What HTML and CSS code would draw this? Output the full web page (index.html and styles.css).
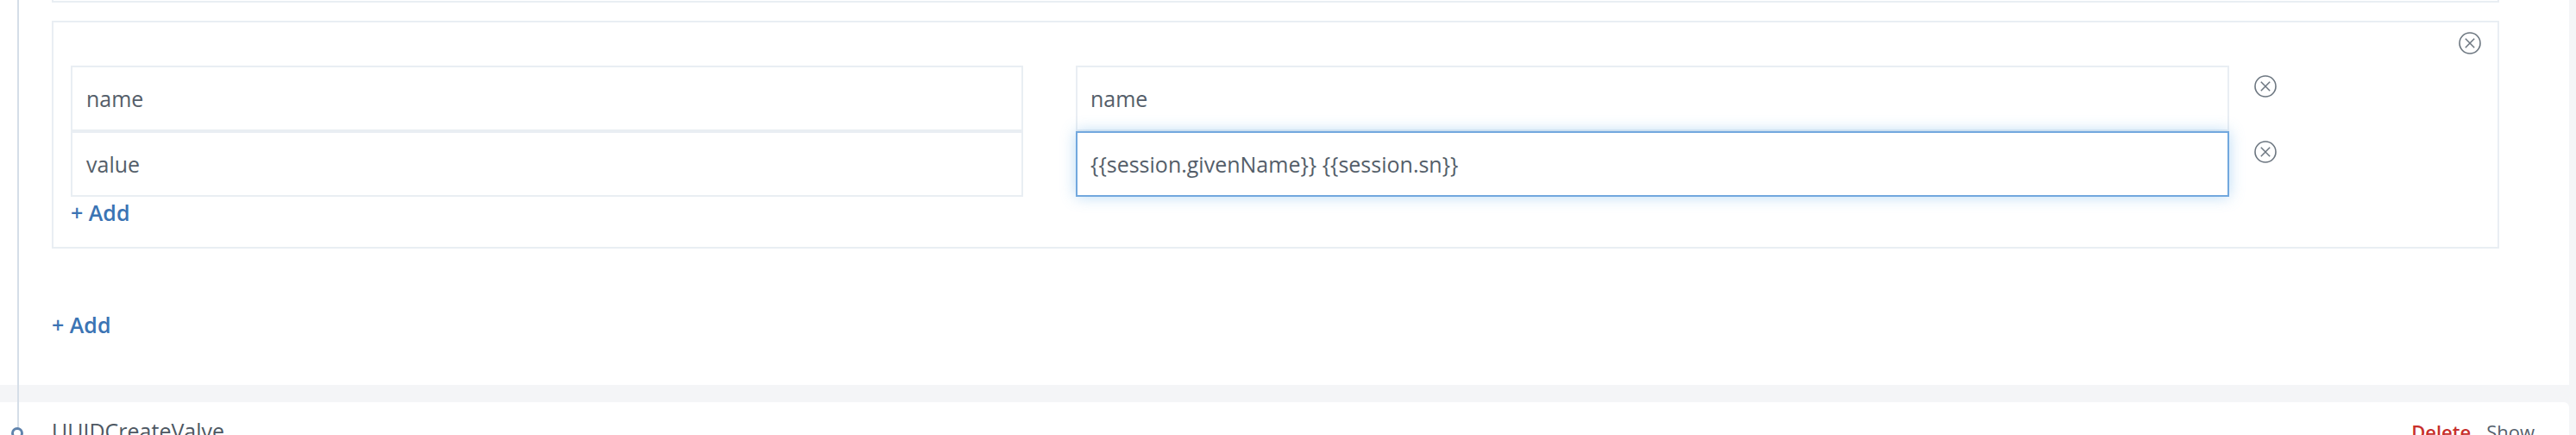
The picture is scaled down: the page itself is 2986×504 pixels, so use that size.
FILE: index.html
```html
<!DOCTYPE html>
<html lang="en">
<head>
<meta charset="utf-8">
<title>Valves</title>
<link rel="stylesheet" href="styles.css">
</head>
<body>
<div class="page">
  <div class="timeline-line"></div>
  <section class="panel panel-top">
    <div class="prev-card"></div>
    <div class="card">
      <div class="card-head">
        <span class="remove" aria-label="Remove"><svg viewBox="0 0 26 26" width="26" height="26"><circle cx="13" cy="13" r="12" fill="none" stroke="#6c7680" stroke-width="1.6"/><path d="M7.8 7.8 L18.2 18.2 M18.2 7.8 L7.8 18.2" stroke="#6c7680" stroke-width="1.5" fill="none"/></svg></span>
      </div>
      <div class="kv-row">
        <div class="cell key">name</div>
        <div class="cell val">name</div>
        <span class="remove row-remove" aria-label="Remove"><svg viewBox="0 0 26 26" width="26" height="26"><circle cx="13" cy="13" r="12" fill="none" stroke="#6c7680" stroke-width="1.6"/><path d="M7.8 7.8 L18.2 18.2 M18.2 7.8 L7.8 18.2" stroke="#6c7680" stroke-width="1.5" fill="none"/></svg></span>
      </div>
      <div class="kv-row">
        <div class="cell key">value</div>
        <div class="cell val focused">{{session.givenName}} {{session.sn}}</div>
        <span class="remove row-remove" aria-label="Remove"><svg viewBox="0 0 26 26" width="26" height="26"><circle cx="13" cy="13" r="12" fill="none" stroke="#6c7680" stroke-width="1.6"/><path d="M7.8 7.8 L18.2 18.2 M18.2 7.8 L7.8 18.2" stroke="#6c7680" stroke-width="1.5" fill="none"/></svg></span>
      </div>
      <div class="add inner-add">+ Add</div>
    </div>
    <div class="add outer-add">+ Add</div>
  </section>
  <section class="panel panel-bottom">
    <span class="node"></span>
    <div class="title">UUIDCreateValve</div>
    <div class="actions"><span class="delete">Delete</span><span class="show">Show</span></div>
  </section>
</div>
</body>
</html>
```
FILE: styles.css
```css
html, body {
  margin: 0;
  padding: 0;
}
body {
  background: #f4f5f7;
  font-family: "Open Sans", "Liberation Sans", sans-serif;
  color: #545e69;
  overflow: hidden;
}
.page {
  position: relative;
  width: 2978px;
}
.timeline-line {
  position: absolute;
  left: 20px;
  top: 0;
  width: 2px;
  height: 500px;
  background: #d5dee8;
  z-index: 2;
}
.panel {
  background: #ffffff;
}
.panel-top {
  padding: 0 81px 53px 60px;
}
.prev-card {
  height: 1px;
  border: 2px solid #e9eef3;
  border-top: none;
}
.card {
  margin-top: 21px;
  border: 2px solid #e9eef3;
  padding: 11px 19px 23px 20px;
}
.card-head {
  display: flex;
  justify-content: flex-end;
  height: 26px;
  margin-bottom: 13px;
}
.remove {
  display: block;
  width: 26px;
  height: 26px;
}
.remove svg {
  display: block;
}
.kv-row {
  display: flex;
  align-items: flex-start;
}
.cell {
  box-sizing: border-box;
  height: 76px;
  border: 2px solid #e9eef3;
  background: #fff;
  font-size: 25px;
  line-height: 72px;
  white-space: nowrap;
  color: #545e69;
}
.key {
  width: 1104px;
  padding-left: 16px;
}
.val {
  width: 1337px;
  margin-left: 61px;
  padding-left: 15px;
}
.val.focused {
  border-color: #72a8de;
  box-shadow: 0 0 16px rgba(102, 175, 233, 0.45);
}
.row-remove {
  margin-left: 29px;
  margin-top: 11px;
}
.add {
  font-size: 25px;
  font-weight: 600;
  line-height: 34px;
  color: #3b74b4;
}
.inner-add {
  margin-top: 1px;
}
.outer-add {
  margin-top: 71px;
}
.panel-bottom {
  position: relative;
  margin-top: 20px;
  height: 60px;
  border-top-right-radius: 6px;
  box-sizing: border-box;
  padding: 16px 40px 0 60px;
  display: flex;
  justify-content: space-between;
  align-items: baseline;
}
.node {
  position: absolute;
  left: 13px;
  top: 29px;
  width: 8px;
  height: 8px;
  border: 3px solid #5f83ac;
  border-radius: 50%;
  background: #ffffff;
  z-index: 3;
}
.title {
  font-size: 25px;
  line-height: 34px;
  color: #4e5863;
}
.actions {
  font-size: 22px;
  line-height: 34px;
}
.delete {
  color: #c8302c;
  font-weight: 600;
  margin-right: 18px;
}
.show {
  color: #56616c;
}
```
